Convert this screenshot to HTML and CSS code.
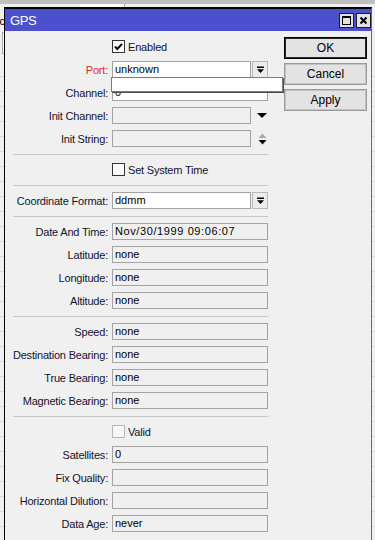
FILE: index.html
```html
<!DOCTYPE html>
<html>
<head>
<meta charset="utf-8">
<title>GPS</title>
<link rel="stylesheet" href="styles.css">
</head>
<body>
<div class="desk">
  <div class="desk-strip"></div>
  <div class="desk-bar">
    <span class="desk-title">ic</span>
    <span class="desk-box"></span>
  </div>
  <div class="desk-field"></div>
  <div class="desk-list">
    <div class="desk-row"></div><div class="desk-row"></div><div class="desk-row"></div><div class="desk-row"></div>
    <div class="desk-row"></div><div class="desk-row"></div><div class="desk-row"></div><div class="desk-row"></div>
    <div class="desk-row"></div><div class="desk-row"></div><div class="desk-row"></div><div class="desk-row"></div>
    <div class="desk-row"></div><div class="desk-row"></div><div class="desk-row"></div><div class="desk-row"></div>
    <div class="desk-row"></div><div class="desk-row"></div><div class="desk-row"></div><div class="desk-row"></div>
    <div class="desk-row"></div><div class="desk-row"></div><div class="desk-row"></div><div class="desk-row"></div>
    <div class="desk-row"></div><div class="desk-row"></div><div class="desk-row"></div><div class="desk-row"></div>
    <div class="desk-row"></div><div class="desk-row"></div><div class="desk-row"></div>
  </div>
</div>

<div class="window">
  <div class="titlebar">
    <span class="title">GPS</span>
    <div class="tb-btns">
      <span class="tb-btn"><svg width="11" height="11" viewBox="0 0 11 11"><rect x="1.5" y="1.5" width="8" height="8" fill="none" stroke="#000" stroke-width="1"/><rect x="1" y="1" width="9" height="2" fill="#000"/></svg></span>
      <span class="tb-btn"><svg width="11" height="11" viewBox="0 0 11 11"><path d="M2.5 2.5 L8.5 8.5 M8.5 2.5 L2.5 8.5" stroke="#000" stroke-width="2" fill="none"/></svg></span>
    </div>
  </div>
  <div class="wbody">
    <div class="form">
      <div class="row">
        <div class="lbl"></div>
        <div class="ctl">
          <span class="cb"><svg width="11" height="11" viewBox="0 0 11 11"><path d="M2 5.5 L4.3 8 L9 2.8" stroke="#000" stroke-width="1.9" fill="none"/></svg></span>
          <span class="cb-label">Enabled</span>
        </div>
      </div>
      <div class="row">
        <div class="lbl red">Port:</div>
        <div class="ctl anchor">
          <div class="field white short">unknown</div>
          <span class="ddbtn"><svg width="9" height="8" viewBox="0 0 9 8"><rect x="1" y="0.5" width="7" height="1.5" fill="#000"/><path d="M1 3.2 L8 3.2 L4.5 7 Z" fill="#000"/></svg></span>
          <div class="popup"></div>
        </div>
      </div>
      <div class="row">
        <div class="lbl">Channel:</div>
        <div class="ctl"><div class="field white">0</div></div>
      </div>
      <div class="row">
        <div class="lbl">Init Channel:</div>
        <div class="ctl">
          <div class="field short"></div>
          <span class="arrow"><svg width="10" height="5" viewBox="0 0 10 5"><path d="M0 0 L10 0 L5 5 Z" fill="#000"/></svg></span>
        </div>
      </div>
      <div class="row">
        <div class="lbl">Init String:</div>
        <div class="ctl">
          <div class="field short"></div>
          <span class="updown"><svg width="9" height="12" viewBox="0 0 9 12"><path d="M0.5 5 L8.5 5 L4.5 0.5 Z" fill="#a8a8a8"/><path d="M0.5 7 L8.5 7 L4.5 11.5 Z" fill="#000"/></svg></span>
        </div>
      </div>

      <div class="sep"></div>

      <div class="row">
        <div class="lbl"></div>
        <div class="ctl">
          <span class="cb"></span>
          <span class="cb-label">Set System Time</span>
        </div>
      </div>

      <div class="sep"></div>

      <div class="row">
        <div class="lbl">Coordinate Format:</div>
        <div class="ctl">
          <div class="field white short">ddmm</div>
          <span class="ddbtn"><svg width="9" height="8" viewBox="0 0 9 8"><rect x="1" y="0.5" width="7" height="1.5" fill="#000"/><path d="M1 3.2 L8 3.2 L4.5 7 Z" fill="#000"/></svg></span>
        </div>
      </div>

      <div class="sep"></div>

      <div class="row"><div class="lbl">Date And Time:</div><div class="ctl"><div class="field wide-text">Nov/30/1999 09:06:07</div></div></div>
      <div class="row"><div class="lbl">Latitude:</div><div class="ctl"><div class="field">none</div></div></div>
      <div class="row"><div class="lbl">Longitude:</div><div class="ctl"><div class="field">none</div></div></div>
      <div class="row"><div class="lbl">Altitude:</div><div class="ctl"><div class="field">none</div></div></div>

      <div class="sep"></div>

      <div class="row"><div class="lbl">Speed:</div><div class="ctl"><div class="field">none</div></div></div>
      <div class="row"><div class="lbl">Destination Bearing:</div><div class="ctl"><div class="field">none</div></div></div>
      <div class="row"><div class="lbl">True Bearing:</div><div class="ctl"><div class="field">none</div></div></div>
      <div class="row"><div class="lbl">Magnetic Bearing:</div><div class="ctl"><div class="field">none</div></div></div>

      <div class="sep"></div>

      <div class="row">
        <div class="lbl"></div>
        <div class="ctl">
          <span class="cb disabled"></span>
          <span class="cb-label">Valid</span>
        </div>
      </div>
      <div class="row"><div class="lbl">Satellites:</div><div class="ctl"><div class="field">0</div></div></div>
      <div class="row"><div class="lbl">Fix Quality:</div><div class="ctl"><div class="field"></div></div></div>
      <div class="row"><div class="lbl">Horizontal Dilution:</div><div class="ctl"><div class="field"></div></div></div>
      <div class="row"><div class="lbl">Data Age:</div><div class="ctl"><div class="field">never</div></div></div>
    </div>

    <div class="buttons">
      <div class="btn default">OK</div>
      <div class="btn">Cancel</div>
      <div class="btn">Apply</div>
    </div>
  </div>
</div>
</body>
</html>
```

FILE: styles.css
```css
* { box-sizing: border-box; }

html, body {
  margin: 0;
  padding: 0;
  width: 375px;
  height: 540px;
  overflow: hidden;
}

body {
  background: #f0f0f0;
  font-family: "Liberation Sans", Arial, sans-serif;
  font-size: 11px;
  color: #000;
  position: relative;
}

/* ---------- background application ---------- */
.desk-strip {
  height: 4px;
  background: #bfbfbf;
}
.desk-bar {
  display: flex;
  align-items: flex-start;
  height: 28px;
}
.desk-title {
  width: 83px;
  margin-left: -3px;
  padding-top: 11px;
  line-height: 13px;
  color: #000;
}
.desk-box {
  width: 45px;
  height: 4px;
  background: #fff;
  border-right: 1px solid #a0a0a0;
}
.desk-field {
  margin-left: 2px;
  width: 100px;
  height: 22px;
  background: #fff;
  border: 1px solid #a8a8a8;
}
.desk-list {
  margin-top: 8px;
}
.desk-row {
  height: 15px;
  border-bottom: 1px solid #dadada;
}

/* ---------- window ---------- */
.window {
  position: absolute;
  left: 4px;
  top: 7px;
  width: 368px;
  height: 540px;
  background: #f0f0f0;
  border: 1px solid #000;
  border-top-width: 2px;
  border-right-color: #6a6a6a;
}

.titlebar {
  height: 22px;
  background: #4b50cd;
  display: flex;
  align-items: center;
  padding: 0 0 0 5px;
}
.title {
  color: #fff;
  font-size: 13px;
  letter-spacing: -0.4px;
}
.tb-btns {
  margin-left: auto;
  display: flex;
  gap: 2px;
}
.tb-btn {
  width: 15px;
  height: 15px;
  border: 1px solid #1e1e1e;
  background: #e2e2e2;
  display: flex;
  align-items: center;
  justify-content: center;
}
.tb-btn svg { display: block; }

.wbody {
  display: flex;
  align-items: flex-start;
  padding: 4px 0 0 8px;
}

/* ---------- form ---------- */
.form {
  width: 255px;
  display: flex;
  flex-direction: column;
}
.row {
  height: 23px;
  display: flex;
  align-items: center;
}
.lbl {
  width: 95px;
  margin-right: 4px;
  display: flex;
  justify-content: flex-end;
  white-space: nowrap;
  color: #121230;
  letter-spacing: -0.2px;
}
.lbl.red { color: #e3262d; }

.ctl {
  width: 156px;
  height: 23px;
  display: flex;
  align-items: center;
}
.ctl.anchor { position: relative; }

.field {
  width: 156px;
  height: 17px;
  border: 1px solid #a3a3a3;
  background: #f0f0f0;
  padding: 0 2px;
  line-height: 15px;
  white-space: nowrap;
  overflow: hidden;
  color: #000;
}
.field.white { background: #fff; }
.field.short { width: 139px; }
.field.wide-text { letter-spacing: 0.6px; }

.ddbtn {
  width: 16px;
  height: 17px;
  margin-left: 1px;
  border: 1px solid #b9b9b9;
  background: #ececec;
  display: flex;
  align-items: center;
  justify-content: center;
}
.ddbtn svg { display: block; }

.arrow {
  margin-left: 6px;
  display: flex;
}
.updown {
  margin-left: 7px;
  display: flex;
}
.arrow svg, .updown svg { display: block; }

.popup {
  position: absolute;
  left: -1px;
  top: 19px;
  width: 172px;
  height: 15px;
  background: #fff;
  border: 1px solid #7c7c7c;
  box-shadow: 1px 1px 0 #4a4a4a;
  z-index: 2;
}

.cb {
  width: 13px;
  height: 13px;
  border: 1px solid #333;
  background: #fff;
  display: flex;
  align-items: center;
  justify-content: center;
}
.cb svg { display: block; }
.cb.disabled {
  border-color: #b8b8b8;
  background: #f6f6f6;
}
.cb-label {
  margin-left: 3px;
  color: #121230;
  letter-spacing: -0.2px;
}

.sep {
  height: 1px;
  background: #c8c8c8;
  margin: 4px 0 3px 0;
}

/* ---------- buttons ---------- */
.buttons {
  margin-left: 16px;
  margin-top: 2px;
  width: 83px;
  display: flex;
  flex-direction: column;
  gap: 4px;
}
.btn {
  height: 22px;
  border: 1px solid #9a9a9a;
  box-shadow: inset 0 0 0 1px #c4c4c4;
  background: #e3e3e3;
  display: flex;
  align-items: center;
  justify-content: center;
  font-size: 12px;
  color: #000;
}
.btn.default {
  border-color: #000;
  box-shadow: inset 0 0 0 1px #2a2a2a;
}
```
